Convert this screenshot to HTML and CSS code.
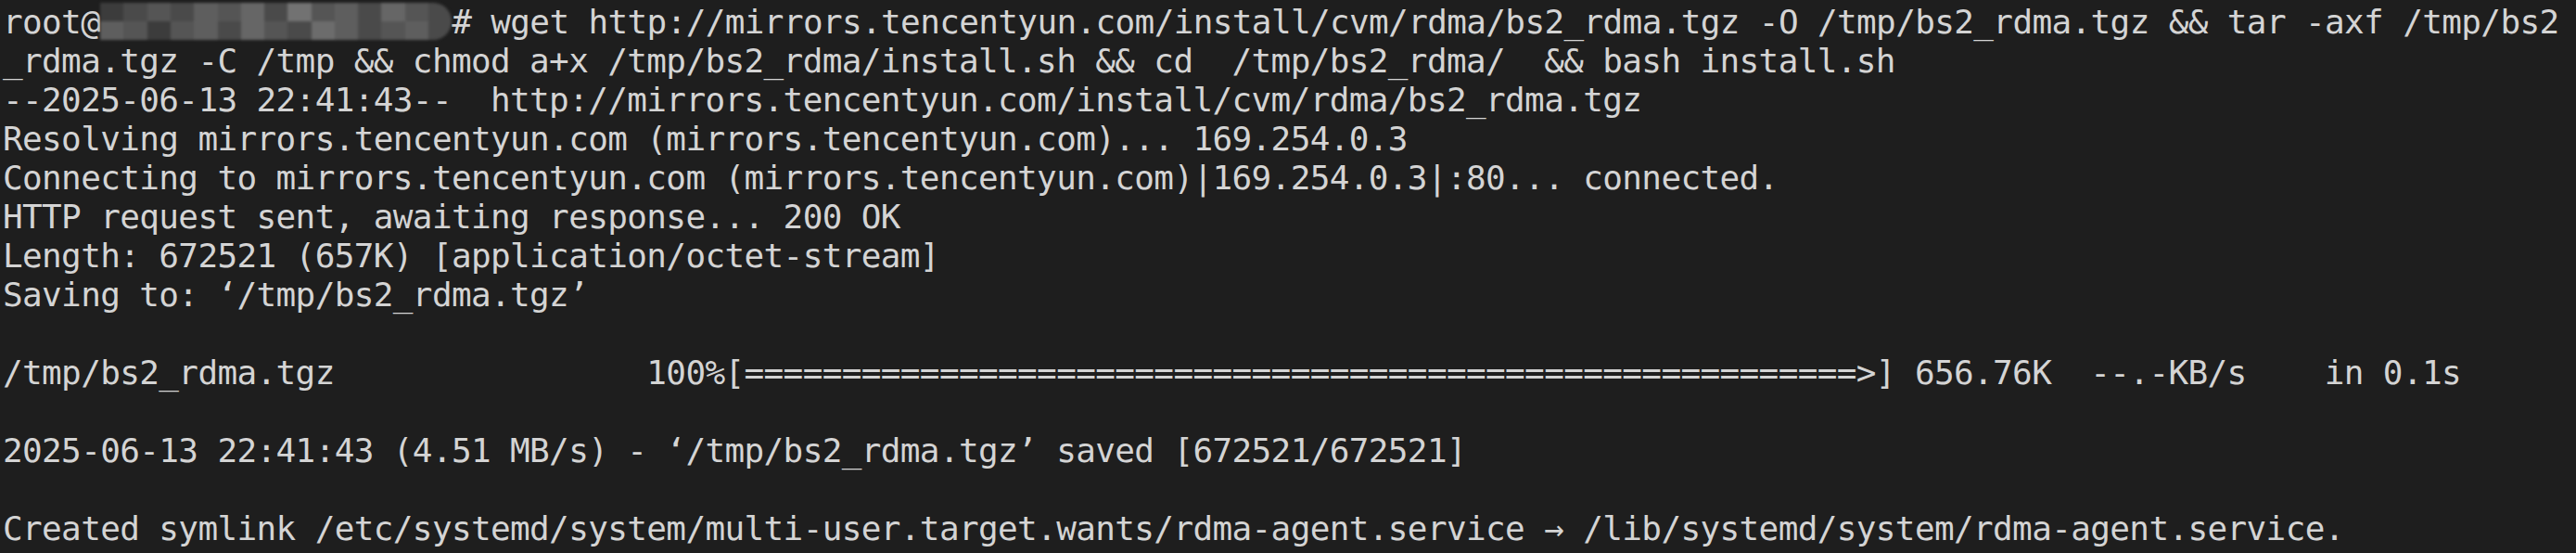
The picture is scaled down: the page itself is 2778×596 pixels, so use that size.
FILE: index.html
```html
<!DOCTYPE html>
<html>
<head>
<meta charset="utf-8">
<link rel="stylesheet" href="styles.css">
</head>
<body>
<div class="term">
<div class="line">root@<span class="redact"><i class="g1"></i><i class="g2"></i><i class="g3"></i><i class="g2"></i><i class="g4"></i><i class="g3"></i><i class="g5"></i><i class="g2"></i><i class="g6"></i><i class="g3"></i><i class="g4"></i><i class="g2"></i><i class="g5"></i><i class="g3"></i><i class="g2"></i><i class="g4"></i><i class="g3"></i><i class="g1"></i><i class="g3"></i><i class="g4"></i><i class="g2"></i><i class="g5"></i><i class="g3"></i><i class="g2"></i><i class="g7"></i><i class="g4"></i><i class="g2"></i><i class="g3"></i><i class="g4"></i><i class="g2"></i></span># wget http://mirrors.tencentyun.com/install/cvm/rdma/bs2_rdma.tgz -O /tmp/bs2_rdma.tgz &amp;&amp; tar -axf /tmp/bs2</div>
<div class="line">_rdma.tgz -C /tmp &amp;&amp; chmod a+x /tmp/bs2_rdma/install.sh &amp;&amp; cd  /tmp/bs2_rdma/  &amp;&amp; bash install.sh</div>
<div class="line">--2025-06-13 22:41:43--  http://mirrors.tencentyun.com/install/cvm/rdma/bs2_rdma.tgz</div>
<div class="line">Resolving mirrors.tencentyun.com (mirrors.tencentyun.com)... 169.254.0.3</div>
<div class="line">Connecting to mirrors.tencentyun.com (mirrors.tencentyun.com)|169.254.0.3|:80... connected.</div>
<div class="line">HTTP request sent, awaiting response... 200 OK</div>
<div class="line">Length: 672521 (657K) [application/octet-stream]</div>
<div class="line">Saving to: ‘/tmp/bs2_rdma.tgz’</div>
<div class="line"> </div>
<div class="line">/tmp/bs2_rdma.tgz                100%[=========================================================>] 656.76K  --.-KB/s    in 0.1s</div>
<div class="line"> </div>
<div class="line">2025-06-13 22:41:43 (4.51 MB/s) - ‘/tmp/bs2_rdma.tgz’ saved [672521/672521]</div>
<div class="line"> </div>
<div class="line">Created symlink /etc/systemd/system/multi-user.target.wants/rdma-agent.service → /lib/systemd/system/rdma-agent.service.</div>
</div>
</body>
</html>
```
FILE: styles.css
```css
html, body {
  margin: 0;
  padding: 0;
  background: #1e1e1e;
  width: 2778px;
  height: 596px;
  overflow: hidden;
}
.term {
  padding: 3px 0 0 3px;
  font-family: "DejaVu Sans Mono", "Liberation Mono", monospace;
  font-size: 36px;
  letter-spacing: -0.634px;
  line-height: 42px;
  color: #d4d4d4;
}
.line {
  white-space: pre;
  height: 42px;
}
.redact {
  display: inline-grid;
  grid-template-columns: repeat(15, 1fr);
  grid-template-rows: 1fr 1fr;
  width: 379px;
  height: 40px;
  vertical-align: top;
  border-radius: 0 20px 20px 0;
  overflow: hidden;
  filter: blur(1.5px);
  letter-spacing: 0;
}
.redact i { display: block; }
.g1 { background: #3c3c3c; }
.g2 { background: #4a4a4a; }
.g3 { background: #555555; }
.g4 { background: #5e5e5e; }
.g5 { background: #666666; }
.g6 { background: #727272; }
.g7 { background: #6c6c6c; }
```
